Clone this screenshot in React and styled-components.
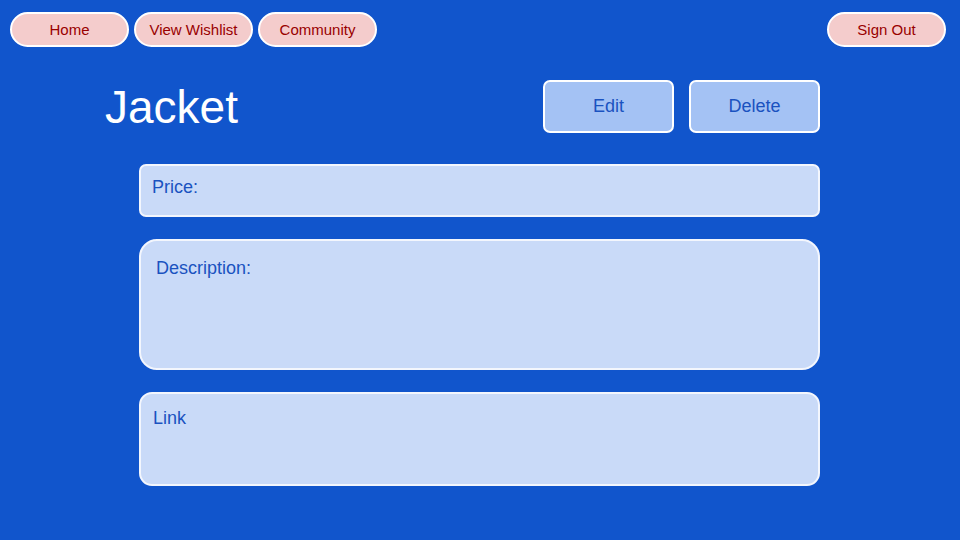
import styled, { createGlobalStyle } from "styled-components";

const GlobalStyle = createGlobalStyle`
  * {
    box-sizing: border-box;
  }
  body {
    margin: 0;
    background-color: #1155cc;
    font-family: "Liberation Sans", Arial, sans-serif;
  }
`;

const Page = styled.div`
  width: 960px;
  height: 540px;
  background-color: #1155cc;
  overflow: hidden;
`;
const NavBar = styled.nav`
  display: flex;
  justify-content: space-between;
  padding: 12px 14px 0 10px;
`;
const NavGroup = styled.div`
  display: flex;
  gap: 5px;
`;
const NavPill = styled.button`
  width: 119px;
  height: 35px;
  border: 2px solid #ffffff;
  border-radius: 18px;
  background-color: #f4cccc;
  color: #990000;
  font-family: "Liberation Sans", Arial, sans-serif;
  font-size: 15px;
  padding: 0;
  cursor: pointer;
`;
const Main = styled.main`
  width: 715px;
  margin: 33px 0 0 105px;
`;
const Header = styled.div`
  display: flex;
  justify-content: space-between;
  align-items: center;
  height: 52px;
`;
const Title = styled.h1`
  margin: 0;
  padding-top: 2px;
  color: #ffffff;
  font-size: 46px;
  font-weight: 400;
  line-height: 1;
`;
const Actions = styled.div`
  display: flex;
  gap: 15px;
`;
const ActionButton = styled.button`
  width: 131px;
  height: 53px;
  border: 2px solid #ffffff;
  border-radius: 7px;
  background-color: #a4c2f4;
  color: #1a52c0;
  font-family: "Liberation Sans", Arial, sans-serif;
  font-size: 18px;
  cursor: pointer;
`;
const Fields = styled.div`
  display: flex;
  flex-direction: column;
  gap: 22px;
  margin: 32px 0 0 34px;
`;
const Field = styled.div`
  height: ${({ $height }) => $height}px;
  padding: ${({ $pad }) => $pad};
  border: 2px solid #f3f6fd;
  border-radius: ${({ $radius }) => $radius}px;
  background-color: #c9daf8;
  color: #1a52c0;
  font-size: 18px;
`;

const App = () => {
  return (
    <Page>
      <GlobalStyle />
      <NavBar>
        <NavGroup>
          <NavPill>Home</NavPill>
          <NavPill>View Wishlist</NavPill>
          <NavPill>Community</NavPill>
        </NavGroup>
        <NavPill>Sign Out</NavPill>
      </NavBar>
      <Main>
        <Header>
          <Title>Jacket</Title>
          <Actions>
            <ActionButton>Edit</ActionButton>
            <ActionButton>Delete</ActionButton>
          </Actions>
        </Header>
        <Fields>
          <Field $height={53} $radius={7} $pad="11px 11px">
            Price:
          </Field>
          <Field $height={131} $radius={18} $pad="17px 15px">
            Description:
          </Field>
          <Field $height={94} $radius={13} $pad="14px 12px">
            Link
          </Field>
        </Fields>
      </Main>
    </Page>
  );
};

export default App;
